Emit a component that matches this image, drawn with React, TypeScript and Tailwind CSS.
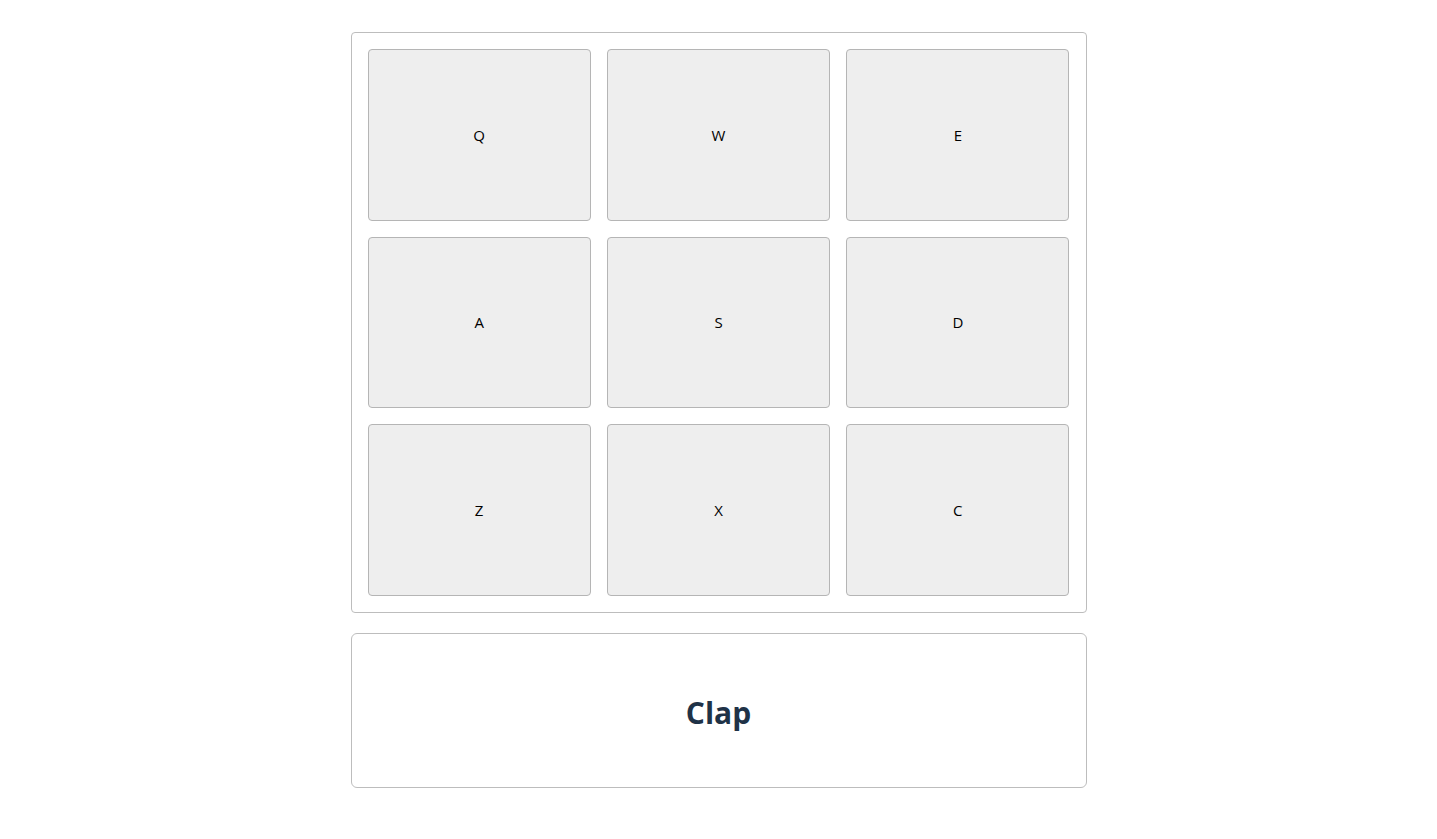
import React from 'react';

const keys = ['Q', 'W', 'E', 'A', 'S', 'D', 'Z', 'X', 'C'];

export default function App() {
  return (
    <div className="min-h-screen bg-white pt-8 font-['Open_Sans','Noto_Sans',sans-serif]">
      <div className="mx-auto w-[736px]">
        {/* pad grid */}
        <div className="grid grid-cols-3 gap-4 rounded border border-[#bdbdbd] p-4">
          {keys.map((k) => (
            <button
              key={k}
              className="flex h-[171.5px] items-center justify-center rounded border border-[#b5b5b5] bg-[#eeeeee] text-[15px] text-black"
            >
              {k}
            </button>
          ))}
        </div>

        {/* display */}
        <div className="mt-5 flex h-[155px] items-center justify-center rounded-md border border-[#bdbdbd]">
          <h2 className="pt-1 text-[30px] font-bold text-[#1f3247]">Clap</h2>
        </div>
      </div>
    </div>
  );
}
